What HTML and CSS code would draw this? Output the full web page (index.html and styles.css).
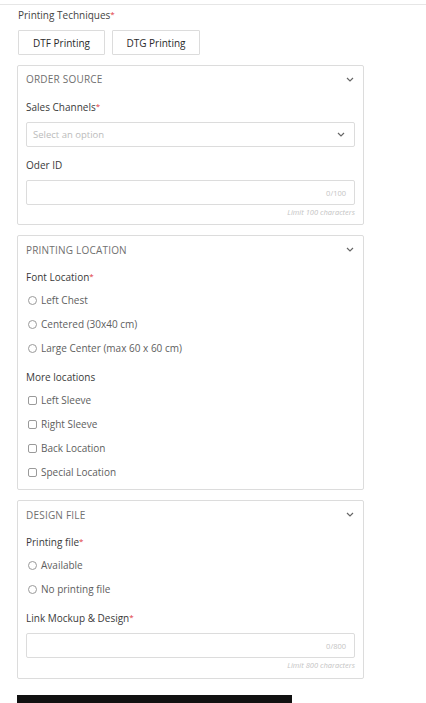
FILE: index.html
```
<!DOCTYPE html>
<html>
<head>
<meta charset="utf-8">
<link rel="stylesheet" href="styles.css">
</head>
<body>
<div class="topline"></div>
<main class="form">
  <div class="label first">Printing Techniques<span class="req">*</span></div>
  <div class="techs">
    <button class="tech tech-dtf">DTF Printing</button>
    <button class="tech tech-dtg">DTG Printing</button>
  </div>

  <section class="card card-first">
    <div class="card-head"><span>ORDER SOURCE</span>
      <svg class="chev" width="8" height="5" viewBox="0 0 8 5"><path d="M1 1l3 3 3-3" fill="none" stroke="#666" stroke-width="1.2"/></svg>
    </div>
    <div class="label">Sales Channels<span class="req">*</span></div>
    <div class="field select"><span class="ph">Select an option</span>
      <svg class="chev" width="8" height="5" viewBox="0 0 8 5"><path d="M1 1l3 3 3-3" fill="none" stroke="#666" stroke-width="1.2"/></svg>
    </div>
    <div class="label gap">Oder ID</div>
    <div class="field input"><span class="count">0/100</span></div>
    <div class="limit">Limit 100 characters</div>
  </section>

  <section class="card">
    <div class="card-head"><span>PRINTING LOCATION</span>
      <svg class="chev" width="8" height="5" viewBox="0 0 8 5"><path d="M1 1l3 3 3-3" fill="none" stroke="#666" stroke-width="1.2"/></svg>
    </div>
    <div class="label">Font Location<span class="req">*</span></div>
    <div class="options">
      <div class="opt"><span class="radio"></span>Left Chest</div>
      <div class="opt"><span class="radio"></span>Centered (30x40 cm)</div>
      <div class="opt"><span class="radio"></span>Large Center (max 60 x 60 cm)</div>
    </div>
    <div class="label gap2">More locations</div>
    <div class="options">
      <div class="opt"><span class="check"></span>Left Sleeve</div>
      <div class="opt"><span class="check"></span>Right Sleeve</div>
      <div class="opt"><span class="check"></span>Back Location</div>
      <div class="opt"><span class="check"></span>Special Location</div>
    </div>
  </section>

  <section class="card card-last">
    <div class="card-head"><span>DESIGN FILE</span>
      <svg class="chev" width="8" height="5" viewBox="0 0 8 5"><path d="M1 1l3 3 3-3" fill="none" stroke="#666" stroke-width="1.2"/></svg>
    </div>
    <div class="label">Printing file<span class="req">*</span></div>
    <div class="options">
      <div class="opt"><span class="radio"></span>Available</div>
      <div class="opt"><span class="radio"></span>No printing file</div>
    </div>
    <div class="label gap2">Link Mockup &amp; Design<span class="req">*</span></div>
    <div class="field input"><span class="count">0/800</span></div>
    <div class="limit">Limit 800 characters</div>
  </section>

  <div class="submit"></div>
</main>
</body>
</html>
```
FILE: styles.css
```
* { box-sizing: border-box; }
html, body { margin: 0; padding: 0; background: #fff; }
body {
  font-family: "Open Sans", "Noto Sans", sans-serif;
  font-size: 10px;
  color: #3a3a3a;
  overflow: hidden;
}
.topline {
  margin-top: 4px;
  border-top: 1px solid #e6e6e6;
}
.form {
  padding-left: 17px;
  width: 364px;
}
.label {
  height: 14px;
  line-height: 14px;
  margin-top: 7px;
  color: #3a3a3a;
}
.label.first { margin-top: 3px; margin-left: 1px; color: #444; }
.label.gap { margin-top: 11px; }
.label.gap2 { margin-top: 10px; }
.req { color: #e0353b; font-size: 8px; vertical-align: top; line-height: 12px; }
.techs {
  display: flex;
  gap: 7px;
  margin-top: 8px;
  margin-left: 1px;
}
.tech {
  height: 25px;
  border: 1px solid #dcdcdc;
  background: #fff;
  font-family: inherit;
  font-size: 10px;
  color: #2a2a2a;
  padding: 0;
  border-radius: 1px;
}
.tech-dtf { width: 87px; }
.tech-dtg { width: 88px; }
.card {
  border: 1px solid #dcdcdc;
  border-radius: 2px;
  padding: 0 8px 5px 8px;
  margin-top: 10px;
}
.card-first { padding-bottom: 6px; }
.card-first .card-head { height: 26px; }
.card-first .card-head + .label { margin-top: 8px; }
.card-last { padding-bottom: 7px; }
.card-head {
  height: 27px;
  display: flex;
  align-items: center;
  justify-content: space-between;
  color: #707070;
  letter-spacing: 0.2px;
}
.card-head .chev { margin-right: 1px; }
.field {
  height: 25px;
  border: 1px solid #dcdcdc;
  border-radius: 2px;
  margin-top: 8px;
  display: flex;
  align-items: center;
  padding: 0 8px;
}
.select { justify-content: space-between; padding: 0 9px 0 6px; }
.ph { color: #bbbbbb; font-size: 9.5px; }
.input { justify-content: flex-end; }
.count { color: #c4c4c4; font-size: 7.5px; }
.limit {
  text-align: right;
  font-style: italic;
  color: #c4c4c4;
  font-size: 7.5px;
  height: 12px;
  line-height: 12px;
  margin-top: 1px;
}
.options { margin-top: 4px; }
.opt {
  height: 24px;
  display: flex;
  align-items: center;
  color: #5e5e5e;
  padding-left: 2px;
}
.radio {
  width: 9px;
  height: 9px;
  border: 1px solid #9a9a9a;
  border-radius: 50%;
  margin-right: 4px;
}
.check {
  width: 9px;
  height: 9px;
  border: 1px solid #9a9a9a;
  border-radius: 2px;
  margin-right: 4px;
}
.submit {
  margin-top: 16px;
  width: 275px;
  height: 40px;
  background: #111;
}
```
